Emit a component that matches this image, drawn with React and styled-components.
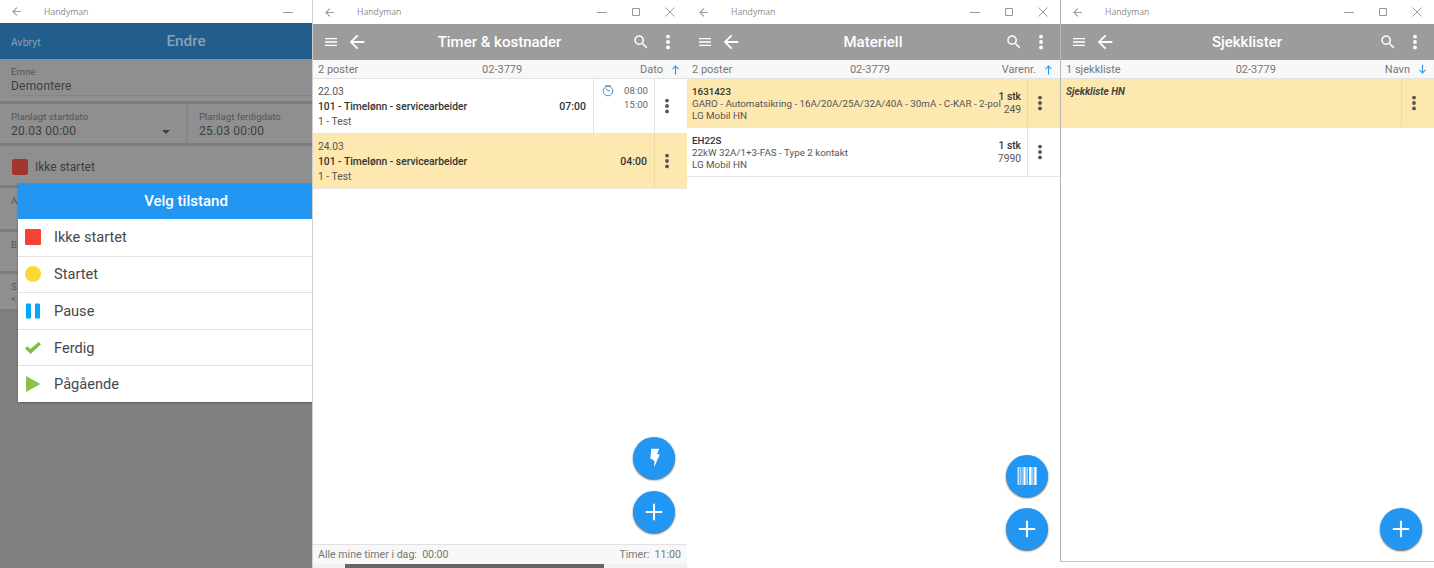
import styled, { createGlobalStyle } from 'styled-components'

const GlobalStyle = createGlobalStyle`
    html, body {
        margin: 0;
        padding: 0;
        background: #fff;
    }
    body {
        font-family: Roboto, "Liberation Sans", sans-serif;
        overflow: hidden;
    }
    * {
        box-sizing: border-box;
    }
`

const Page = styled.div`
    display: flex;
    width: 1434px;
    height: 568px;
    overflow: hidden;
`

const Window = styled.section`
    position: relative;
    flex: 0 0 ${(props) => props.$width}px;
    width: ${(props) => props.$width}px;
    min-width: 0;
    height: ${(props) => props.$height ?? 568}px;
    display: flex;
    flex-direction: column;
    overflow: hidden;
    background: #fff;
    border-left: ${(props) => props.$edge ?? 'none'};
    border-bottom: ${(props) => props.$bottom ?? 'none'};
`

const TitleBar = styled.div`
    flex: 0 0 ${(props) => props.$height ?? 24}px;
    display: flex;
    align-items: center;
    padding-left: 10px;
    background: #fff;
    color: #8c8c8c;
`

const AppName = styled.span`
    margin-left: 21px;
    font-family: "Open Sans", sans-serif;
    font-size: 8.7px;
`

const WinButtons = styled.div`
    margin-left: auto;
    display: flex;
    gap: 20px;
    padding-right: ${(props) => props.$right ?? 10}px;
`

const Header = styled.header`
    flex: 0 0 36px;
    display: grid;
    grid-template-columns: 1fr auto 1fr;
    align-items: center;
    padding: 0 11px 0 10px;
    background: #9c9c9c;
    color: #fff;
`

const HeaderTitle = styled.h1`
    margin: 0;
    text-align: center;
    font-size: 15px;
    font-weight: 500;
`

const HeaderLeft = styled.div`
    display: flex;
    align-items: center;
    gap: 7px;
`

const HeaderRight = styled.div`
    display: flex;
    align-items: center;
    justify-content: flex-end;
    gap: 10px;
`

const SortBar = styled.div`
    flex: 0 0 19px;
    display: flex;
    justify-content: space-between;
    align-items: center;
    padding: 0 5px;
    background: #f8f8f8;
    border-bottom: 1px solid #e2e2e2;
    color: #777;
    font-size: 11px;
`

const JobNumber = styled.span`
    margin-left: 6px;
`

const SortBy = styled.span`
    display: flex;
    align-items: center;
    gap: 6px;
`

const List = styled.div`
    flex: 1;
    min-height: 0;
`

const Row = styled.article`
    display: flex;
    height: ${(props) => props.$height}px;
    background: ${(props) => (props.$active ? '#fde8b0' : '#fff')};
    border-bottom: 1px solid #e4e4e4;
    color: #444;
`

const RowBody = styled.div`
    flex: 1;
    min-width: 0;
    display: flex;
    flex-direction: column;
    justify-content: center;
    gap: 3px;
    padding: 2px 0 0 5px;
    font-size: 10.3px;
    line-height: 12px;
`

const BodyLine = styled.div`
    display: flex;
    justify-content: space-between;
    white-space: nowrap;
    font-weight: ${(props) => (props.$bold ? 500 : 400)};
    color: ${(props) => (props.$bold ? '#333' : '#555')};
`

const Hours = styled.span`
    font-size: 10.5px;
    padding-right: 7px;
`

const TimeCell = styled.div`
    flex: 0 0 61px;
    display: flex;
    justify-content: space-between;
    padding: 6px 6px 0 8px;
    border-left: 1px solid #e4e4e4;
`

const TimeStack = styled.div`
    display: flex;
    flex-direction: column;
    gap: 1.5px;
    font-size: 9.6px;
    line-height: 12.5px;
    color: #666;
    text-align: right;
`

const MoreCell = styled.div`
    flex: 0 0 33px;
    display: flex;
    align-items: center;
    justify-content: center;
    padding-right: 9px;
    color: #555;
    border-left: 1px solid ${(props) => (props.$active ? '#f0d9a0' : '#e4e4e4')};
`

const MaterialBody = styled(RowBody)`
    gap: 0;
    justify-content: flex-start;
    padding-top: 7px;
    font-size: 9.8px;
`

const Amount = styled.div`
    flex: 0 0 28px;
    display: flex;
    flex-direction: column;
    align-items: flex-end;
    gap: 1px;
    padding: 12px 6px 0 0;
    white-space: nowrap;
    font-size: 10.3px;
    line-height: 12px;
    color: #555;

    b {
        font-weight: 500;
        color: #333;
    }
`

const ChecklistName = styled.div`
    flex: 1;
    padding: 7px 5px;
    font-size: 10px;
    line-height: 12px;
    font-weight: 700;
    font-style: italic;
    color: #444;
`

const Footer = styled.footer`
    flex: 0 0 20px;
    display: flex;
    justify-content: space-between;
    align-items: center;
    padding: 0 6px 0 5px;
    background: #f8f8f8;
    border-top: 1px solid #e2e2e2;
    color: #777;
    font-size: 10.6px;
`

const ScrollTrack = styled.div`
    flex: 0 0 4px;
    padding-left: 32px;
    background: #f1f1f1;
`

const ScrollThumb = styled.div`
    width: 259px;
    height: 100%;
    background: #666;
`

const FabStack = styled.div`
    position: absolute;
    right: 12px;
    bottom: ${(props) => props.$bottom}px;
    display: flex;
    flex-direction: column;
    gap: ${(props) => props.$gap ?? 12}px;
`

const Fab = styled.button`
    width: 42px;
    height: 42px;
    padding: 0;
    display: flex;
    align-items: center;
    justify-content: center;
    border: none;
    border-radius: 50%;
    background: #2196f3;
    color: #fff;
    box-shadow: 0 1px 2px rgba(0, 0, 0, 0.65);
`

/* first window, dimmed behind the dialog. its real width is 372, the next window covers the rest */
const DimHeader = styled.header`
    flex: 0 0 36px;
    width: 372px;
    position: relative;
    display: flex;
    align-items: center;
    justify-content: center;
    background: #215d8d;
    color: #8aa0b2;
`

const Cancel = styled.span`
    position: absolute;
    left: 11px;
    top: 13px;
    font-size: 10.5px;
`

const DimTitle = styled.h1`
    margin: 0;
    font-size: 15.3px;
    font-weight: 500;
`

const DimBody = styled.div`
    flex: 1;
    background: #808080;
    color: #3e3e3e;
`

const FieldRow = styled.div`
    display: flex;
    height: ${(props) => props.$height}px;
    background: #8f8f8f;
    border-bottom: 3px solid #7c7c7c;
`

const Field = styled.div`
    position: relative;
    flex: ${(props) => (props.$width ? `0 0 ${props.$width}px` : 1)};
    padding: 7px 0 0 11px;
    border-right: ${(props) => (props.$divide ? '2px solid #858585' : 'none')};
`

const FieldLine = styled.div`
    height: 1px;
    margin-top: 1px;
    background: #858585;
`

const FieldLabel = styled.div`
    font-size: 9.7px;
    line-height: 12px;
    color: #555;
`

const FieldValue = styled.div`
    font-size: 12px;
    line-height: 16px;
    letter-spacing: 0.2px;
`

const Caret = styled.span`
    position: absolute;
    right: 16px;
    top: 26px;
    border-left: 4px solid transparent;
    border-right: 4px solid transparent;
    border-top: 4px solid #3e3e3e;
`

const StatusRow = styled(FieldRow)`
    align-items: center;
    gap: 7px;
    padding: 3px 0 0 12px;
    font-size: 12px;
`

const StatusBox = styled.span`
    width: 16px;
    height: 16px;
    border-radius: 2px;
    background: #a33530;
`

const Dialog = styled.div`
    position: absolute;
    left: 18px;
    top: 183px;
    width: 336px;
    background: #fff;
    box-shadow: 0 1px 2px rgba(0, 0, 0, 0.3);
`

const DialogTitle = styled.div`
    height: 36px;
    display: flex;
    align-items: center;
    justify-content: center;
    background: #2196f3;
    color: #fff;
    font-size: 15px;
    font-weight: 500;
`

const Option = styled.div`
    display: flex;
    align-items: center;
    height: 36.6px;
    padding-left: 7px;
    border-top: ${(props) => (props.$first ? 'none' : '1px solid #e2e2e2')};
    color: #484848;
    font-size: 14.6px;
`

const OptionIcon = styled.svg`
    flex: 0 0 16px;
    width: 16px;
    height: 16px;
    margin-right: 13px;
`

const Icon = ({ d, size = 20, color = 'currentColor' }) => (
    <svg width={size} height={size} viewBox="0 0 24 24" fill={color}>
        <path d={d} />
    </svg>
)

const ICONS = {
    menu: 'M3 18h18v-2H3v2zm0-5h18v-2H3v2zm0-7v2h18V6H3z',
    back: 'M20 11H7.83l5.59-5.59L12 4l-8 8 8 8 1.41-1.41L7.83 13H20v-2z',
    search:
        'M15.5 14h-.79l-.28-.27A6.47 6.47 0 0 0 16 9.5 6.5 6.5 0 1 0 9.5 16c1.61 0 3.09-.59 4.23-1.57l.27.28v.79l5 4.99L20.49 19l-4.99-5zm-6 0C7.01 14 5 11.99 5 9.5S7.01 5 9.5 5 14 7.01 14 9.5 11.99 14 9.5 14z',
    plus: 'M19 12.9h-6.1V19h-1.8v-6.1H5v-1.8h6.1V5h1.8v6.1H19z',
    flash: 'M9 2h8.5l-2 6h2.7l-1.4 4.6h-2l1.2 1L12 22l.6-7.2h-2.4l.5-1.6H8z',
    arrowUp: 'M11 21V8l-4 4-1.2-1.2L12 4l6.2 6.8L17 12l-4-4v13z',
    arrowDown: 'M13 3v13l4-4 1.2 1.2L12 20l-6.2-6.8L7 12l4 4V3z',
}

const Dots = () => (
    <svg width="16" height="16" viewBox="0 0 16 16" fill="currentColor">
        <circle cx="8" cy="2.6" r="1.9" />
        <circle cx="8" cy="8" r="1.9" />
        <circle cx="8" cy="13.4" r="1.9" />
    </svg>
)

const Clock = () => (
    <svg width="12" height="12" viewBox="0 0 12 12" fill="none" stroke="#4a90c4" strokeWidth="1">
        <circle cx="6" cy="6" r="4.8" />
        <path d="M3.8 3.4 6 6l2-.8M3 .8h6" />
    </svg>
)

const Barcode = () => (
    <svg width="20" height="20" viewBox="0 0 20 20" fill="#fff">
        <rect x="0.5" y="1" width="1.4" height="18" opacity="0.8" />
        <rect x="2.6" y="1" width="1.2" height="18" opacity="0.7" />
        <rect x="4.5" y="1" width="1" height="18" opacity="0.7" />
        <rect x="6.4" y="1" width="2.2" height="18" />
        <rect x="9.6" y="1" width="1" height="18" />
        <rect x="12" y="1" width="2.6" height="18" />
        <rect x="15.4" y="1" width="1" height="18" opacity="0.8" />
        <rect x="17.2" y="1" width="2.4" height="18" />
    </svg>
)

const WinControls = ({ full, right }) => (
    <WinButtons $right={right}>
        <svg width="14" height="12" viewBox="0 0 14 12" stroke="#999" fill="none">
            <path d="M2 6.5h10" />
        </svg>
        {full && (
            <>
                <svg width="14" height="12" viewBox="0 0 14 12" stroke="#999" fill="none">
                    <path d="M3.5 2.5h7v7h-7z" />
                </svg>
                <svg width="14" height="12" viewBox="0 0 14 12" stroke="#999" fill="none">
                    <path d="M2.5 1.5l9 9M11.5 1.5l-9 9" />
                </svg>
            </>
        )}
    </WinButtons>
)

const Title = ({ full = true, height, right }) => (
    <TitleBar $height={height}>
        <Icon d={ICONS.back} size={13} color="#999" />
        <AppName>Handyman</AppName>
        <WinControls full={full} right={right} />
    </TitleBar>
)

const AppHeader = ({ title }) => (
    <Header>
        <HeaderLeft>
            <Icon d={ICONS.menu} size={16} />
            <Icon d={ICONS.back} size={22} />
        </HeaderLeft>
        <HeaderTitle>{title}</HeaderTitle>
        <HeaderRight>
            <Icon d={ICONS.search} size={18} />
            <Dots />
        </HeaderRight>
    </Header>
)

const Sort = ({ count, label, up = true }) => (
    <SortBar>
        <span>{count}</span>
        <JobNumber>02-3779</JobNumber>
        <SortBy>
            {label}
            <Icon d={up ? ICONS.arrowUp : ICONS.arrowDown} size={13} color="#2196f3" />
        </SortBy>
    </SortBar>
)

const TimeRow = ({ date, hours, active, children }) => (
    <Row $height={55} $active={active}>
        <RowBody>
            <BodyLine>{date}</BodyLine>
            <BodyLine $bold>
                101 - Timelønn - servicearbeider
                <Hours>{hours}</Hours>
            </BodyLine>
            <BodyLine>1 - Test</BodyLine>
        </RowBody>
        {children}
        <MoreCell $active={active}>
            <Dots />
        </MoreCell>
    </Row>
)

const materials = [
    {
        code: '1631423',
        name: 'GARO - Automatsikring - 16A/20A/25A/32A/40A - 30mA - C-KAR - 2-pol',
        price: '249',
        active: true,
    },
    { code: 'EH22S', name: '22kW 32A/1+3-FAS - Type 2 kontakt', price: '7990' },
]

const options = [
    {
        label: 'Ikke startet',
        icon: <rect x="0" y="0" width="16" height="16" rx="1" fill="#f44336" />,
    },
    { label: 'Startet', icon: <circle cx="8" cy="8" r="8" fill="#fdd835" /> },
    {
        label: 'Pause',
        icon: (
            <path d="M1 1.5a1 1 0 0 1 1-1h3a1 1 0 0 1 1 1v13a1 1 0 0 1-1 1H2a1 1 0 0 1-1-1zM10 1.5a1 1 0 0 1 1-1h3a1 1 0 0 1 1 1v13a1 1 0 0 1-1 1h-3a1 1 0 0 1-1-1z" fill="#03a9f4" />
        ),
    },
    {
        label: 'Ferdig',
        icon: <path d="M0 8.5l2.4-2.2 3 2.8L13.6 2 16 4.2 5.6 14z" fill="#7cc142" />,
    },
    { label: 'Pågående', icon: <path d="M1 0l14.5 8L1 16z" fill="#8bc34a" /> },
]

const EditWindow = () => (
    <Window $width={312}>
        <Title full={false} height={23} right={17} />
        <DimHeader>
            <Cancel>Avbryt</Cancel>
            <DimTitle>Endre</DimTitle>
        </DimHeader>
        <DimBody>
            <FieldRow $height={45}>
                <Field>
                    <FieldLabel>Emne</FieldLabel>
                    <FieldValue>Demontere</FieldValue>
                    <FieldLine />
                </Field>
            </FieldRow>
            <FieldRow $height={42}>
                <Field $width={188} $divide>
                    <FieldLabel>Planlagt startdato</FieldLabel>
                    <FieldValue>20.03 00:00</FieldValue>
                    <Caret />
                </Field>
                <Field>
                    <FieldLabel>Planlagt ferdigdato</FieldLabel>
                    <FieldValue>25.03 00:00</FieldValue>
                </Field>
            </FieldRow>
            <StatusRow $height={42}>
                <StatusBox />
                Ikke startet
            </StatusRow>
            <FieldRow $height={44}>
                <Field>
                    <FieldLabel>A</FieldLabel>
                </Field>
            </FieldRow>
            <FieldRow $height={42}>
                <Field>
                    <FieldLabel>B</FieldLabel>
                </Field>
            </FieldRow>
            <FieldRow $height={38}>
                <Field>
                    <FieldLabel>S</FieldLabel>
                    <FieldLabel>&lt;</FieldLabel>
                </Field>
            </FieldRow>
        </DimBody>
        <Dialog>
            <DialogTitle>Velg tilstand</DialogTitle>
            {options.map((option, index) => (
                <Option key={option.label} $first={index === 0}>
                    <OptionIcon viewBox="0 0 16 16">{option.icon}</OptionIcon>
                    {option.label}
                </Option>
            ))}
        </Dialog>
    </Window>
)

const HoursWindow = () => (
    <Window $width={375} $edge="1px solid #d0d0d0">
        <Title />
        <AppHeader title="Timer & kostnader" />
        <Sort count="2 poster" label="Dato" />
        <List>
            <TimeRow date="22.03" hours="07:00">
                <TimeCell>
                    <Clock />
                    <TimeStack>
                        <span>08:00</span>
                        <span>15:00</span>
                    </TimeStack>
                </TimeCell>
            </TimeRow>
            <TimeRow date="24.03" hours="04:00" active />
        </List>
        <Footer>
            <span>Alle mine timer i dag:&nbsp; 00:00</span>
            <span>Timer:&nbsp; 11:00</span>
        </Footer>
        <ScrollTrack>
            <ScrollThumb />
        </ScrollTrack>
        <FabStack $bottom={35}>
            <Fab>
                <Icon d={ICONS.flash} size={22} />
            </Fab>
            <Fab>
                <Icon d={ICONS.plus} size={28} />
            </Fab>
        </FabStack>
    </Window>
)

const MaterialWindow = () => (
    <Window $width={373}>
        <Title />
        <AppHeader title="Materiell" />
        <Sort count="2 poster" label="Varenr." />
        <List>
            {materials.map((item) => (
                <Row key={item.code} $height={49} $active={item.active}>
                    <MaterialBody>
                        <BodyLine $bold>{item.code}</BodyLine>
                        <BodyLine>{item.name}</BodyLine>
                        <BodyLine>LG Mobil HN</BodyLine>
                    </MaterialBody>
                    <Amount>
                        <b>1 stk</b>
                        {item.price}
                    </Amount>
                    <MoreCell $active={item.active}>
                        <Dots />
                    </MoreCell>
                </Row>
            ))}
        </List>
        <FabStack $bottom={18} $gap={11}>
            <Fab>
                <Barcode />
            </Fab>
            <Fab>
                <Icon d={ICONS.plus} size={28} />
            </Fab>
        </FabStack>
    </Window>
)

const ChecklistWindow = () => (
    <Window $width={374} $height={562} $edge="1px solid #b5b5b5" $bottom="1px solid #c4c4c4">
        <Title />
        <AppHeader title="Sjekklister" />
        <Sort count="1 sjekkliste" label="Navn" up={false} />
        <List>
            <Row $height={49} $active>
                <ChecklistName>Sjekkliste HN</ChecklistName>
                <MoreCell $active>
                    <Dots />
                </MoreCell>
            </Row>
        </List>
        <FabStack $bottom={11}>
            <Fab>
                <Icon d={ICONS.plus} size={28} />
            </Fab>
        </FabStack>
    </Window>
)

function App() {
    return (
        <>
            <GlobalStyle />
            <Page>
                <EditWindow />
                <HoursWindow />
                <MaterialWindow />
                <ChecklistWindow />
            </Page>
        </>
    )
}

export default App
